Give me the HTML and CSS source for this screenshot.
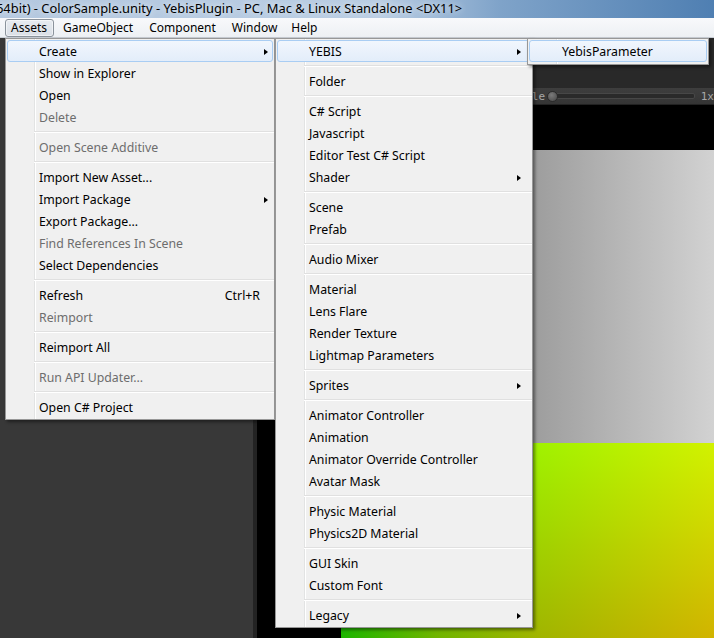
FILE: index.html
```html
<!DOCTYPE html>
<html>
<head>
<meta charset="utf-8">
<link rel="stylesheet" href="styles.css">
</head>
<body>
<div class="window">
  <div class="titlebar"><span class="title">64bit) - ColorSample.unity - YebisPlugin - PC, Mac &amp; Linux Standalone &lt;DX11&gt;</span></div>
  <div class="menubar">
    <span class="mb-item active">Assets</span>
    <span class="mb-item">GameObject</span>
    <span class="mb-item">Component</span>
    <span class="mb-item">Window</span>
    <span class="mb-item">Help</span>
  </div>
  <div class="workspace">
    <div class="left-panel"></div>
    <div class="divider"></div>
    <div class="gameview">
      <div class="tabarea"></div>
      <div class="toolbar">
        <span class="scale-label">Scale</span>
        <span class="slider"><span class="knob"></span><span class="track"></span></span>
        <span class="scale-value">1x</span>
      </div>
      <div class="viewport">
        <div class="render">
          <div class="render-grey"></div>
          <div class="render-color"></div>
        </div>
      </div>
    </div>
  </div>

  <div class="menu menu-assets">
    <div class="item hot"><span class="label">Create</span><span class="sc"></span><span class="arrow"></span></div>
    <div class="item"><span class="label">Show in Explorer</span></div>
    <div class="item"><span class="label">Open</span></div>
    <div class="item disabled"><span class="label">Delete</span></div>
    <div class="sep"></div>
    <div class="item disabled"><span class="label">Open Scene Additive</span></div>
    <div class="sep"></div>
    <div class="item"><span class="label">Import New Asset...</span></div>
    <div class="item"><span class="label">Import Package</span><span class="sc"></span><span class="arrow"></span></div>
    <div class="item"><span class="label">Export Package...</span></div>
    <div class="item disabled"><span class="label">Find References In Scene</span></div>
    <div class="item"><span class="label">Select Dependencies</span></div>
    <div class="sep"></div>
    <div class="item"><span class="label">Refresh</span><span class="sc">Ctrl+R</span></div>
    <div class="item disabled"><span class="label">Reimport</span></div>
    <div class="sep"></div>
    <div class="item"><span class="label">Reimport All</span></div>
    <div class="sep"></div>
    <div class="item disabled"><span class="label">Run API Updater...</span></div>
    <div class="sep"></div>
    <div class="item"><span class="label">Open C# Project</span></div>
  </div>

  <div class="menu menu-create">
    <div class="item hot"><span class="label">YEBIS</span><span class="sc"></span><span class="arrow"></span></div>
    <div class="sep"></div>
    <div class="item"><span class="label">Folder</span></div>
    <div class="sep"></div>
    <div class="item"><span class="label">C# Script</span></div>
    <div class="item"><span class="label">Javascript</span></div>
    <div class="item"><span class="label">Editor Test C# Script</span></div>
    <div class="item"><span class="label">Shader</span><span class="sc"></span><span class="arrow"></span></div>
    <div class="sep"></div>
    <div class="item"><span class="label">Scene</span></div>
    <div class="item"><span class="label">Prefab</span></div>
    <div class="sep"></div>
    <div class="item"><span class="label">Audio Mixer</span></div>
    <div class="sep"></div>
    <div class="item"><span class="label">Material</span></div>
    <div class="item"><span class="label">Lens Flare</span></div>
    <div class="item"><span class="label">Render Texture</span></div>
    <div class="item"><span class="label">Lightmap Parameters</span></div>
    <div class="sep"></div>
    <div class="item"><span class="label">Sprites</span><span class="sc"></span><span class="arrow"></span></div>
    <div class="sep"></div>
    <div class="item"><span class="label">Animator Controller</span></div>
    <div class="item"><span class="label">Animation</span></div>
    <div class="item"><span class="label">Animator Override Controller</span></div>
    <div class="item"><span class="label">Avatar Mask</span></div>
    <div class="sep"></div>
    <div class="item"><span class="label">Physic Material</span></div>
    <div class="item"><span class="label">Physics2D Material</span></div>
    <div class="sep"></div>
    <div class="item"><span class="label">GUI Skin</span></div>
    <div class="item"><span class="label">Custom Font</span></div>
    <div class="sep"></div>
    <div class="item"><span class="label">Legacy</span><span class="sc"></span><span class="arrow"></span></div>
  </div>

  <div class="menu menu-yebis">
    <div class="item hot"><span class="label">YebisParameter</span></div>
  </div>
</div>
</body>
</html>
```

FILE: styles.css
```css
html, body {
  margin: 0;
  padding: 0;
}
body {
  width: 714px;
  height: 638px;
  overflow: hidden;
  font-family: "Noto Sans", "Open Sans", sans-serif;
  font-size: 12.3px;
  background: #383838;
}
.window {
  position: relative;
  width: 714px;
  height: 638px;
  overflow: hidden;
  display: flex;
  flex-direction: column;
}

/* title bar */
.titlebar {
  height: 18px;
  flex: none;
  background: linear-gradient(to right, #b4c8df 0, #b9cde3 380px, #7fa3c9 500px, #4f7fb2 714px);
  overflow: hidden;
  white-space: nowrap;
}
.title {
  display: block;
  margin-left: -4px;
  line-height: 17px;
  font-size: 12.9px;
  color: #000;
  text-shadow: 0 0 6px rgba(255,255,255,0.9);
}

/* menu bar */
.menubar {
  height: 20px;
  flex: none;
  box-sizing: border-box;
  display: flex;
  align-items: center;
  padding-left: 5px;
  background: linear-gradient(#f8f9fb, #edf0f4);
  border-bottom: 1px solid #c9ced5;
  white-space: nowrap;
  font-size: 12px;
}
.mb-item {
  box-sizing: border-box;
  height: 18px;
  line-height: 16px;
  padding: 0 6px;
  margin-right: 2px;
  border: 1px solid transparent;
  color: #000;
}
.mb-item:nth-child(4) {
  margin-right: 0;
}
.mb-item.active {
  padding: 0 6px 0 5px;
  border-color: #8b939c;
  border-radius: 3px;
  background: linear-gradient(#e7ebf0, #dadfe6);
  box-shadow: inset 0 0 0 1px rgba(255,255,255,0.5);
}

/* workspace background */
.workspace {
  flex: 1;
  display: flex;
  min-height: 0;
}
.left-panel {
  width: 253px;
  flex: none;
  background: #383838;
}
.divider {
  width: 4px;
  flex: none;
  background: #232323;
}
.gameview {
  flex: 1;
  display: flex;
  flex-direction: column;
  background: #000;
  min-width: 0;
}
.tabarea {
  height: 50px;
  flex: none;
  background: #292929;
}
.toolbar {
  height: 17px;
  flex: none;
  display: flex;
  align-items: center;
  background: linear-gradient(#3e3e3e, #353535);
  border-bottom: 1px solid #222;
  box-sizing: border-box;
  color: #a8a8a8;
  font-family: "DejaVu Sans Mono", monospace;
  font-size: 11px;
  padding-left: 255px;
  white-space: nowrap;
}
.scale-label {
  width: 34px;
}
.slider {
  position: relative;
  width: 150px;
  height: 12px;
  margin-left: 1px;
  display: flex;
  align-items: center;
}
.track {
  display: block;
  margin-left: 8px;
  width: 138px;
  height: 4px;
  border-radius: 2px;
  background: #2a2a2a;
  border: 1px solid #474747;
}
.knob {
  position: absolute;
  left: 0;
  top: 1px;
  width: 11px;
  height: 11px;
  border-radius: 50%;
  background: radial-gradient(circle at 40% 35%, #7a7a7a, #555 70%);
  border: 1px solid #2a2a2a;
  box-sizing: border-box;
}
.scale-value {
  margin-left: 4px;
}
.viewport {
  flex: 1;
  padding: 45px 0 0 84px;
  min-height: 0;
}
.render {
  height: 100%;
  display: flex;
  flex-direction: column;
}
.render-grey {
  height: 293px;
  flex: none;
  background: linear-gradient(to right, #202020 0, #707070 96px, #9e9e9e 196px, #d2d2d2 373px);
}
.render-color {
  flex: 1;
  background:
    linear-gradient(to right, rgb(28,0,0) 0, rgb(112,0,0) 96px, rgb(160,0,0) 196px, rgb(210,0,0) 373px),
    linear-gradient(to bottom, rgb(0,242,0) 0, rgb(0,180,0) 195px);
  background-blend-mode: screen;
}

/* popup menus */
.menu {
  position: absolute;
  top: 38px;
  box-sizing: border-box;
  background-color: #f0f0f0;
  background-image: linear-gradient(to right, transparent 28px, #e2e3e3 28px, #e2e3e3 29px, #ffffff 29px, #ffffff 30px, transparent 30px);
  border: 1px solid #979797;
  padding: 1px;
  box-shadow: 2px 2px 3px rgba(0,0,0,0.45);
  color: #000;
  white-space: nowrap;
}
.menu-assets {
  left: 5px;
  width: 270px;
}
.menu-create {
  left: 275px;
  width: 258px;
}
.menu-yebis {
  left: 527px;
  width: 182px;
  padding-bottom: 2px;
}
.item {
  box-sizing: border-box;
  height: 22px;
  display: grid;
  grid-template-columns: 1fr auto 8px;
  align-items: center;
  padding-left: 31px;
  padding-top: 2px;
  border: 1px solid transparent;
  border-radius: 3px;
  line-height: 18px;
}
.menu-assets .item { padding-right: 4px; }
.menu-create .item { padding-right: 9px; }
.menu-yebis .item { padding-left: 32px; }
.item.hot {
  border-color: #a9cdf3;
  background: linear-gradient(#f1f6fd, #e3edfa);
}
.item.disabled {
  color: #6d6d6d;
}
.arrow {
  justify-self: end;
  width: 0;
  height: 0;
  border-left: 4px solid #000;
  border-top: 3.5px solid transparent;
  border-bottom: 3.5px solid transparent;
}
.sep {
  height: 8px;
  margin-left: 27px;
  margin-right: -1px;
  background: linear-gradient(to bottom, transparent 3px, #e0e0e0 3px, #e0e0e0 4px, #ffffff 4px, #ffffff 5px, transparent 5px);
}
```
